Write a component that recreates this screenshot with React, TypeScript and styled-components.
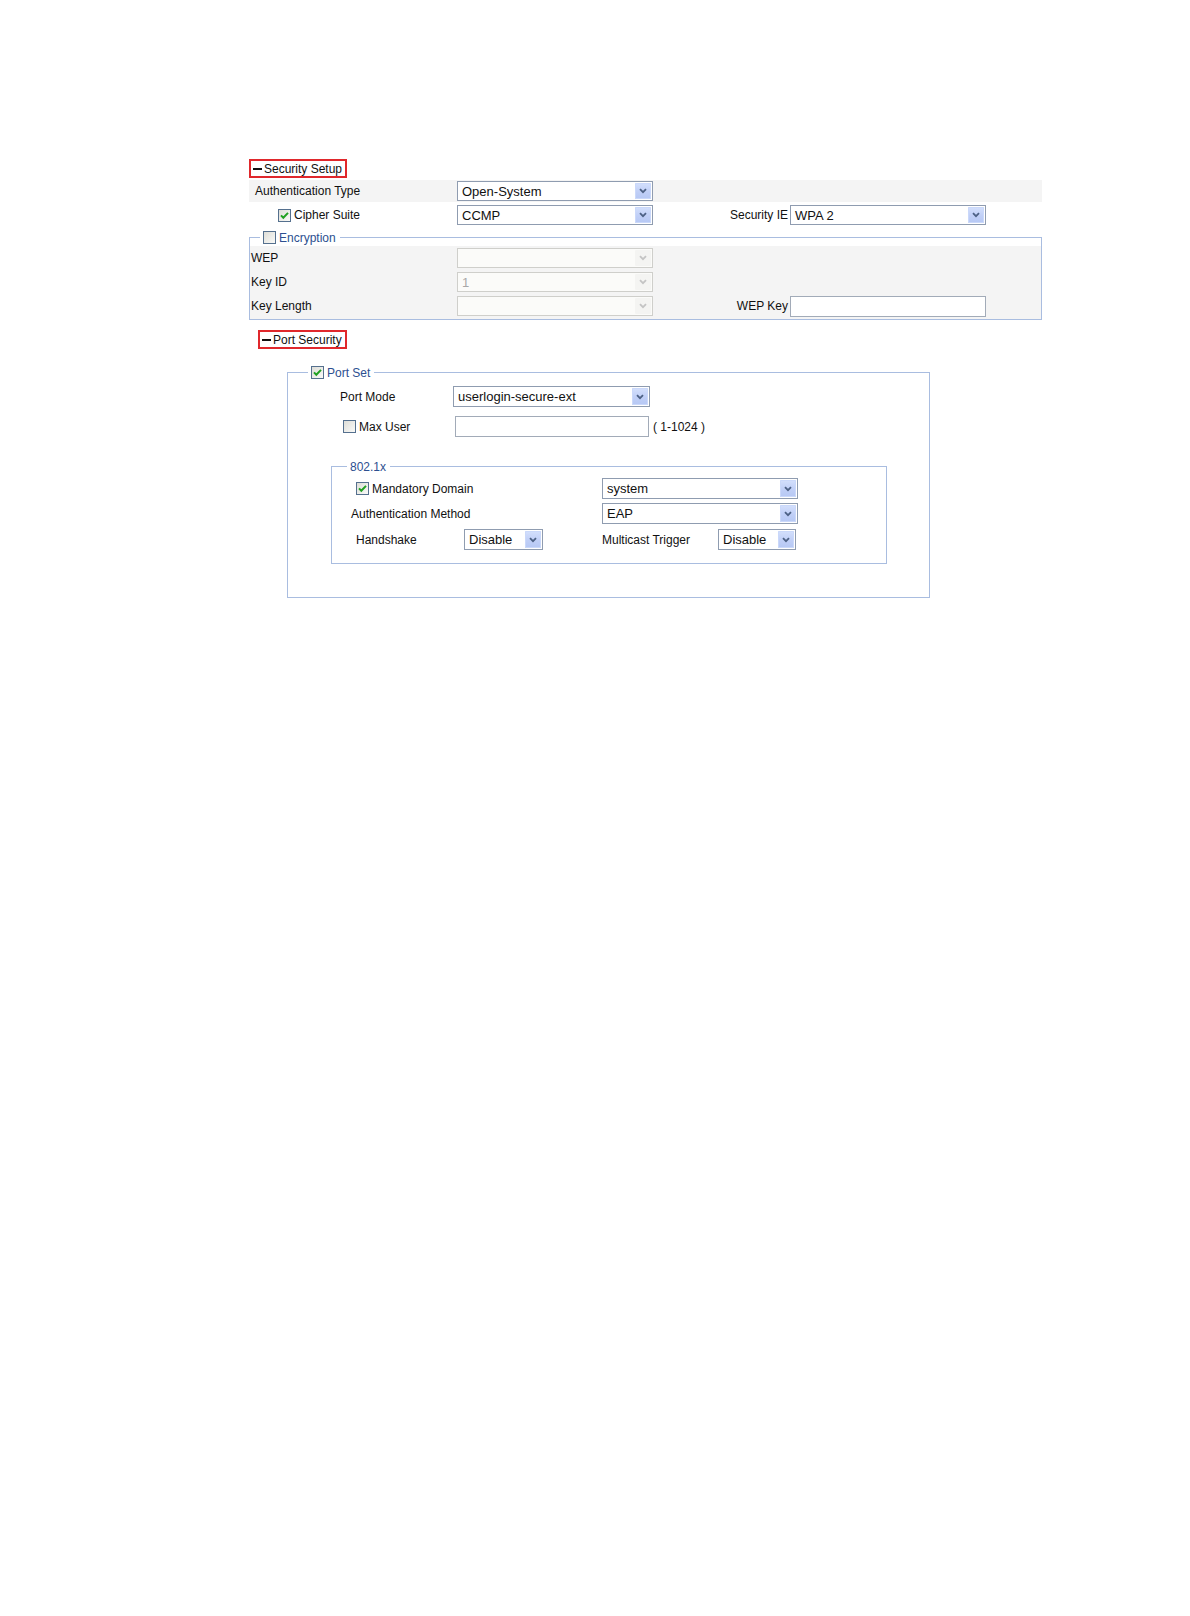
import React from "react";
import styled, { createGlobalStyle } from "styled-components";

const GlobalStyle = createGlobalStyle`
  html, body { margin: 0; padding: 0; background: #fff; }
  body {
    font-family: "Liberation Sans", Arial, sans-serif;
    font-size: 12px;
    color: #111;
  }
`;

const Page = styled.div`
  width: 1190px;
  min-height: 1616px;
  box-sizing: border-box;
  padding: 159px 0 0 249px;
`;

const Section = styled.div`
  width: 793px;
  display: flex;
  flex-direction: column;
`;

const SectionHeader = styled.div<{ $indent?: number; $top?: number }>`
  align-self: flex-start;
  display: inline-flex;
  align-items: center;
  height: 19px;
  box-sizing: border-box;
  border: 2px solid #e0282c;
  padding: 0 3px 0 2px;
  margin-left: ${(p) => p.$indent ?? 0}px;
  margin-top: ${(p) => p.$top ?? 0}px;
  font-size: 12px;
  color: #111;
  white-space: nowrap;
`;

const Dash = styled.span`
  display: inline-block;
  width: 9px;
  height: 2px;
  background: #111;
  margin-right: 2px;
`;

const SetupRow = styled.div<{ $shaded?: boolean; $top?: number }>`
  display: grid;
  grid-template-columns: 208px 196px 1fr 196px;
  padding-right: 56px;
  align-items: center;
  height: 22px;
  margin-top: ${(p) => p.$top ?? 2}px;
  background: ${(p) => (p.$shaded ? "#f4f4f4" : "transparent")};
`;

const Label = styled.span<{ $pad?: number }>`
  display: inline-flex;
  align-items: center;
  gap: 3px;
  padding-left: ${(p) => p.$pad ?? 0}px;
  font-size: 12px;
  color: #111;
  white-space: nowrap;
`;

const RightLabel = styled.span`
  justify-self: end;
  margin-right: 2px;
  font-size: 12px;
  color: #111;
  white-space: nowrap;
`;

const Fieldset = styled.fieldset<{ $w: number; $left?: number; $top?: number; $bottom?: number }>`
  margin: ${(p) => p.$top ?? 0}px 0 0 ${(p) => p.$left ?? 0}px;
  padding: 0 0 ${(p) => p.$bottom ?? 0}px 0;
  width: ${(p) => p.$w}px;
  box-sizing: border-box;
  border: 1px solid #a9bde0;
  min-inline-size: 0;
`;

const Legend = styled.legend<{ $offset: number }>`
  margin-left: ${(p) => p.$offset}px;
  padding: 0 4px 0 3px;
  display: flex;
  align-items: center;
  gap: 3px;
  height: 15px;
  font-size: 12px;
  color: #2d4f90;
  white-space: nowrap;
`;

const ShadedRows = styled.div`
  margin-top: 1px;
  padding-bottom: 1px;
  background: #f4f4f4;
  display: flex;
  flex-direction: column;
`;

const EncRow = styled.div`
  display: grid;
  grid-template-columns: 206px 196px 1fr 196px;
  padding-right: 55px;
  padding-left: 1px;
  align-items: center;
  height: 24px;
`;

const FlowRow = styled.div<{ $top?: number; $pad?: number }>`
  display: flex;
  align-items: center;
  height: 21px;
  margin-top: ${(p) => p.$top ?? 0}px;
  padding-left: ${(p) => p.$pad ?? 0}px;
`;

const Cell = styled.div<{ $w: number }>`
  width: ${(p) => p.$w}px;
  flex: none;
  display: flex;
  align-items: center;
`;

const Hint = styled.span`
  margin-left: 4px;
  font-size: 12px;
  color: #111;
  white-space: nowrap;
`;

const SelectBox = styled.div<{ $w?: number; $disabled?: boolean; $h?: number }>`
  width: ${(p) => (p.$w ? `${p.$w}px` : "100%")};
  height: ${(p) => p.$h ?? 21}px;
  box-sizing: border-box;
  border: 1px solid ${(p) => (p.$disabled ? "#cfcfcb" : "#8f9cb0")};
  background: ${(p) => (p.$disabled ? "#fbfbf9" : "#fff")};
  display: flex;
  align-items: stretch;
  flex: none;
`;

const SelectValue = styled.span<{ $disabled?: boolean }>`
  flex: 1;
  padding-left: 4px;
  display: flex;
  align-items: center;
  font-size: 13px;
  color: ${(p) => (p.$disabled ? "#a8a8a8" : "#111")};
  white-space: nowrap;
  overflow: hidden;
`;

const ArrowBtn = styled.span<{ $disabled?: boolean }>`
  width: 16px;
  margin: 1px 1px 1px 0;
  border-radius: 1px;
  display: flex;
  align-items: center;
  justify-content: center;
  background: ${(p) =>
    p.$disabled
      ? "#f4f4f2"
      : "linear-gradient(180deg, #d4e0fc 0%, #c0cff7 55%, #b6c8f4 100%)"};
  box-shadow: ${(p) => (p.$disabled ? "none" : "inset 0 0 0 1px #cad8fa")};
`;

const TextInput = styled.div<{ $w: number; $h?: number }>`
  width: ${(p) => p.$w}px;
  height: ${(p) => p.$h ?? 21}px;
  box-sizing: border-box;
  border: 1px solid #a2abb8;
  background: #fff;
  flex: none;
`;

const Chevron = ({ disabled }: { disabled?: boolean }) => (
  <svg width="8" height="6" viewBox="0 0 8 6">
    <path
      d="M1 1.2 L4 4.2 L7 1.2"
      fill="none"
      stroke={disabled ? "#c4c4c4" : "#4d6185"}
      strokeWidth="1.8"
    />
  </svg>
);

const Select = ({
  value,
  w,
  h,
  disabled,
}: {
  value?: string;
  w?: number;
  h?: number;
  disabled?: boolean;
}) => (
  <SelectBox $w={w} $h={h} $disabled={disabled}>
    <SelectValue $disabled={disabled}>{value}</SelectValue>
    <ArrowBtn $disabled={disabled}>
      <Chevron disabled={disabled} />
    </ArrowBtn>
  </SelectBox>
);

const Checkbox = ({ checked }: { checked?: boolean }) => (
  <svg width="13" height="13" viewBox="0 0 13 13" style={{ flex: "none" }}>
    <defs>
      <linearGradient id="cbgrad" x1="0" y1="0" x2="1" y2="1">
        <stop offset="0" stopColor="#dcdcd6" />
        <stop offset="1" stopColor="#fbfbf9" />
      </linearGradient>
    </defs>
    <rect x="0.5" y="0.5" width="12" height="12" fill="url(#cbgrad)" stroke="#55708e" />
    {checked && (
      <path d="M3 6.4 L5.3 8.8 L10 3.9" fill="none" stroke="#21a121" strokeWidth="2" />
    )}
  </svg>
);

export default function App() {
  return (
    <>
      <GlobalStyle />
      <Page>
        <Section>
          <SectionHeader>
            <Dash />
            Security Setup
          </SectionHeader>

          <SetupRow $shaded $top={2}>
            <Label $pad={6}>Authentication Type</Label>
            <Select value="Open-System" w={196} h={20} />
          </SetupRow>

          <SetupRow $top={2}>
            <Label $pad={29}>
              <Checkbox checked />
              Cipher Suite
            </Label>
            <Select value="CCMP" w={196} h={20} />
            <RightLabel>Security IE</RightLabel>
            <Select value="WPA 2" w={196} h={20} />
          </SetupRow>

          <Fieldset $w={793} $top={4}>
            <Legend $offset={10}>
              <Checkbox />
              Encryption
            </Legend>
            <ShadedRows>
              <EncRow>
                <Label>WEP</Label>
                <Select w={196} h={20} disabled />
              </EncRow>
              <EncRow>
                <Label>Key ID</Label>
                <Select value="1" w={196} h={20} disabled />
              </EncRow>
              <EncRow>
                <Label>Key Length</Label>
                <Select w={196} h={20} disabled />
                <RightLabel>WEP Key</RightLabel>
                <TextInput $w={196} />
              </EncRow>
            </ShadedRows>
          </Fieldset>

          <SectionHeader $indent={9} $top={10}>
            <Dash />
            Port Security
          </SectionHeader>

          <Fieldset $w={643} $left={38} $top={16} $bottom={33}>
            <Legend $offset={20}>
              <Checkbox checked />
              Port Set
            </Legend>

            <FlowRow $top={6} $pad={52}>
              <Cell $w={113}>
                <Label>Port Mode</Label>
              </Cell>
              <Select value="userlogin-secure-ext" w={197} />
            </FlowRow>

            <FlowRow $top={9} $pad={55}>
              <Cell $w={112}>
                <Label>
                  <Checkbox />
                  Max User
                </Label>
              </Cell>
              <TextInput $w={194} />
              <Hint>( 1-1024 )</Hint>
            </FlowRow>

            <Fieldset $w={556} $left={43} $top={22} $bottom={13}>
              <Legend $offset={15}>802.1x</Legend>

              <FlowRow $top={4} $pad={24}>
                <Cell $w={246}>
                  <Label>
                    <Checkbox checked />
                    Mandatory Domain
                  </Label>
                </Cell>
                <Select value="system" w={196} />
              </FlowRow>

              <FlowRow $top={4} $pad={19}>
                <Cell $w={251}>
                  <Label>Authentication Method</Label>
                </Cell>
                <Select value="EAP" w={196} />
              </FlowRow>

              <FlowRow $top={5} $pad={24}>
                <Cell $w={108}>
                  <Label>Handshake</Label>
                </Cell>
                <Select value="Disable" w={79} />
                <Cell $w={59} />
                <Cell $w={116}>
                  <Label>Multicast Trigger</Label>
                </Cell>
                <Select value="Disable" w={78} />
              </FlowRow>
            </Fieldset>
          </Fieldset>
        </Section>
      </Page>
    </>
  );
}
